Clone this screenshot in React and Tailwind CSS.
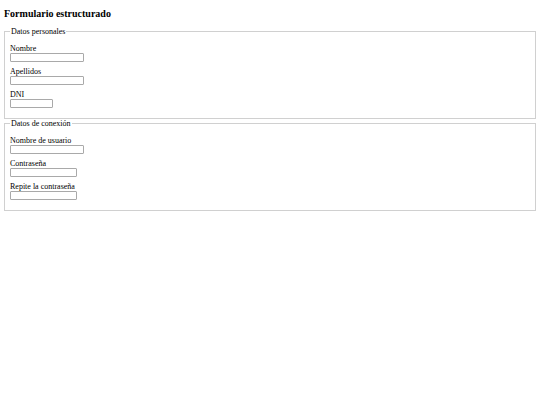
import React from 'react';

// Formulario con dos grupos de campos (fieldset + legend)
const Campo = ({ label, width, type = 'text' }) => (
  <div className="flex flex-col">
    <label className="text-[8px] leading-[8px] h-[8px] text-black">{label}</label>
    <input
      type={type}
      className={`${width} h-[9px] border border-[#a9a9a9] rounded-[1px] bg-white`}
    />
  </div>
);

const Grupo = ({ legend, children }) => (
  <fieldset className="mx-[4px] border border-[#d0d0d0] px-[5px] pb-[10px]">
    <legend className="px-[1px] text-[8px] leading-[9px] text-black">{legend}</legend>
    <div className="flex flex-col gap-[6px] pt-[9px]">{children}</div>
  </fieldset>
);

export default function App() {
  return (
    <div className="w-[540px] h-[405px] bg-white font-['Liberation_Serif',serif] text-black">
      <h3 className="pt-[7.5px] px-[4px] mb-[7.5px] text-[10px] leading-[11.5px] font-bold">
        Formulario estructurado
      </h3>
      <Grupo legend="Datos personales">
        <Campo label="Nombre" width="w-[73.5px]" />
        <Campo label="Apellidos" width="w-[73.5px]" />
        <Campo label="DNI" width="w-[43px]" />
      </Grupo>
      <Grupo legend="Datos de conexión">
        <Campo label="Nombre de usuario" width="w-[73.5px]" />
        <Campo label="Contraseña" width="w-[66.5px]" type="password" />
        <Campo label="Repite la contraseña" width="w-[66.5px]" type="password" />
      </Grupo>
    </div>
  );
}
